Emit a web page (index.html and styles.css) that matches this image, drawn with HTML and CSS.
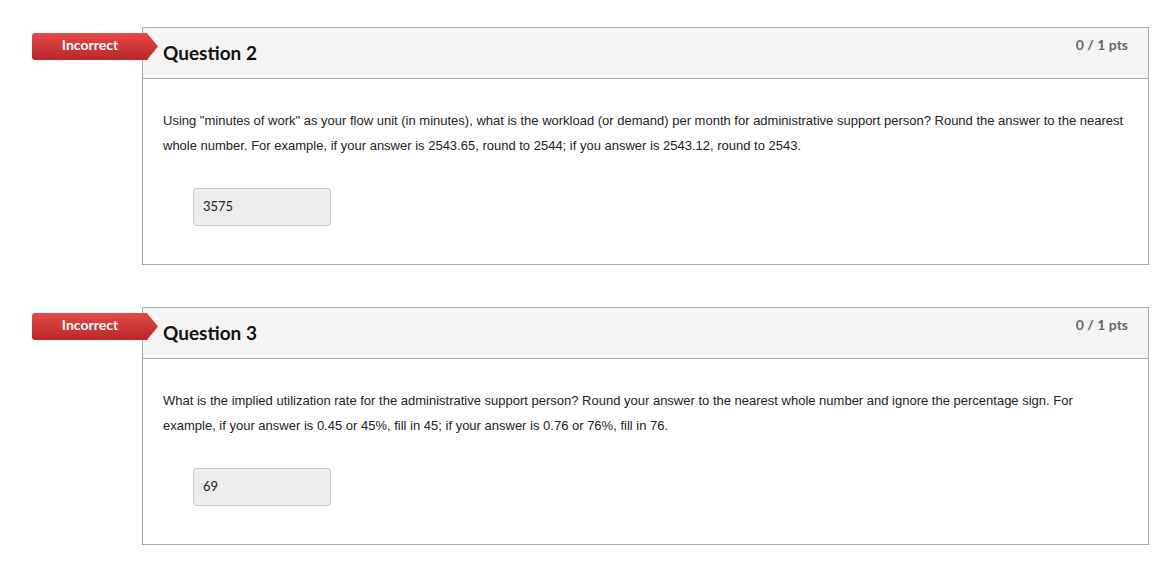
FILE: index.html
```html
<!DOCTYPE html>
<html>
<head>
<meta charset="utf-8">
<link rel="stylesheet" href="styles.css">
</head>
<body>
<div class="page">
  <div class="question">
    <div class="badge">Incorrect</div>
    <div class="q-header">
      <h2 class="q-title">Question 2</h2>
      <span class="q-pts">0 / 1 pts</span>
    </div>
    <div class="q-body">
      <p class="q-text">Using "minutes of work" as your flow unit (in minutes), what is the workload (or demand) per month for administrative support person? Round the answer to the nearest whole number. For example, if your answer is 2543.65, round to 2544; if you answer is 2543.12, round to 2543.</p>
      <div class="answer">3575</div>
    </div>
  </div>
  <div class="question">
    <div class="badge">Incorrect</div>
    <div class="q-header">
      <h2 class="q-title">Question 3</h2>
      <span class="q-pts">0 / 1 pts</span>
    </div>
    <div class="q-body">
      <p class="q-text">What is the implied utilization rate for the administrative support person? Round your answer to the nearest whole number and ignore the percentage sign. For example, if your answer is 0.45 or 45%, fill in 45; if your answer is 0.76 or 76%, fill in 76.</p>
      <div class="answer">69</div>
    </div>
  </div>
</div>
</body>
</html>
```

FILE: styles.css
```css
html, body {
  margin: 0;
  padding: 0;
  background: #fff;
}
.page {
  padding: 27px 0 0 142px;
  width: 1007px;
  display: flex;
  flex-direction: column;
  gap: 42px;
}
.question {
  position: relative;
  border: 1px solid #aaa;
  background: #fff;
}
.badge {
  position: absolute;
  left: -111px;
  top: 5px;
  width: 126px;
  height: 27px;
  box-sizing: border-box;
  padding-right: 10px;
  background: linear-gradient(#e44848, #b8282a);
  border-radius: 3px 0 0 3px;
  clip-path: polygon(0 0, 115px 0, 126px 50%, 115px 100%, 0 100%);
  color: #fff;
  font-family: Lato, "Liberation Sans", sans-serif;
  font-weight: bold;
  font-size: 14px;
  display: flex;
  align-items: flex-start;
  justify-content: center;
  line-height: 24px;
}
.q-header {
  display: flex;
  justify-content: space-between;
  align-items: flex-start;
  background: #f4f4f4;
  border-bottom: 1px solid #aaa;
  height: 50px;
  padding: 0 20px 0 20px;
}
.q-title {
  margin: 12px 0 0 0;
  font-family: Lato, "Liberation Sans", sans-serif;
  font-weight: bold;
  font-size: 19px;
  line-height: 26px;
  color: #111;
}
.q-pts {
  margin-top: 8px;
  font-family: Lato, "Liberation Sans", sans-serif;
  font-weight: bold;
  font-size: 14px;
  line-height: 18px;
  color: #666;
}
.q-body {
  padding: 29px 20px 38px 20px;
}
.q-text {
  margin: 0;
  font-family: "Liberation Sans", Arial, sans-serif;
  font-size: 13px;
  line-height: 25px;
  color: #222;
}
.answer {
  margin: 30px 0 0 30px;
  width: 138px;
  height: 38px;
  box-sizing: border-box;
  background: #ededed;
  border: 1px solid #ccc;
  border-radius: 3px;
  padding: 0 9px;
  font-family: Lato, "Liberation Sans", sans-serif;
  font-size: 13px;
  line-height: 35px;
  color: #222;
}
```
